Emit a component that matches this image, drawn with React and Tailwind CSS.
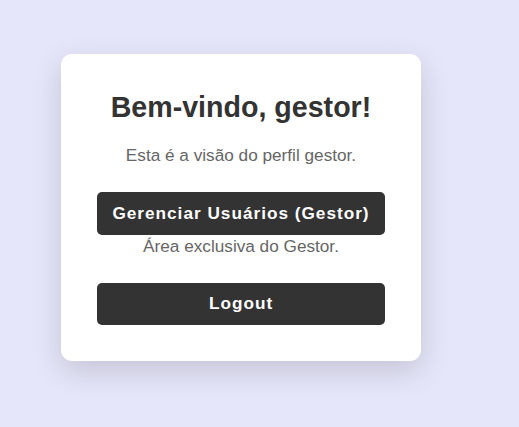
export default function App() {
  return (
    <div className="min-h-screen w-full bg-[#e6e6fa] pt-[54px] pl-[61px]" style={{ fontFamily: '"Liberation Sans", Arial, sans-serif' }}>
      <div className="w-[360px] rounded-[11px] bg-white px-[36px] pt-[36px] pb-[36px] text-center shadow-[0_10px_30px_rgba(0,0,0,0.15)]">
        <h1 className="text-[28.6px] font-bold leading-[34px] text-[#333]">Bem-vindo, gestor!</h1>
        <p className="mt-[21px] text-[17.2px] leading-[20px] text-[#666]">Esta é a visão do perfil gestor.</p>
        <button className="mt-[27px] h-[43px] w-full rounded-[5px] bg-[#333] text-[17.2px] font-bold tracking-[1px] text-white">
          Gerenciar Usuários (Gestor)
        </button>
        <p className="mt-[1px] text-[17.2px] leading-[20px] text-[#666]">Área exclusiva do Gestor.</p>
        <button className="mt-[27px] h-[42px] w-full rounded-[5px] bg-[#333] text-[17.2px] font-bold tracking-[1px] text-white">
          Logout
        </button>
      </div>
    </div>
  );
}
